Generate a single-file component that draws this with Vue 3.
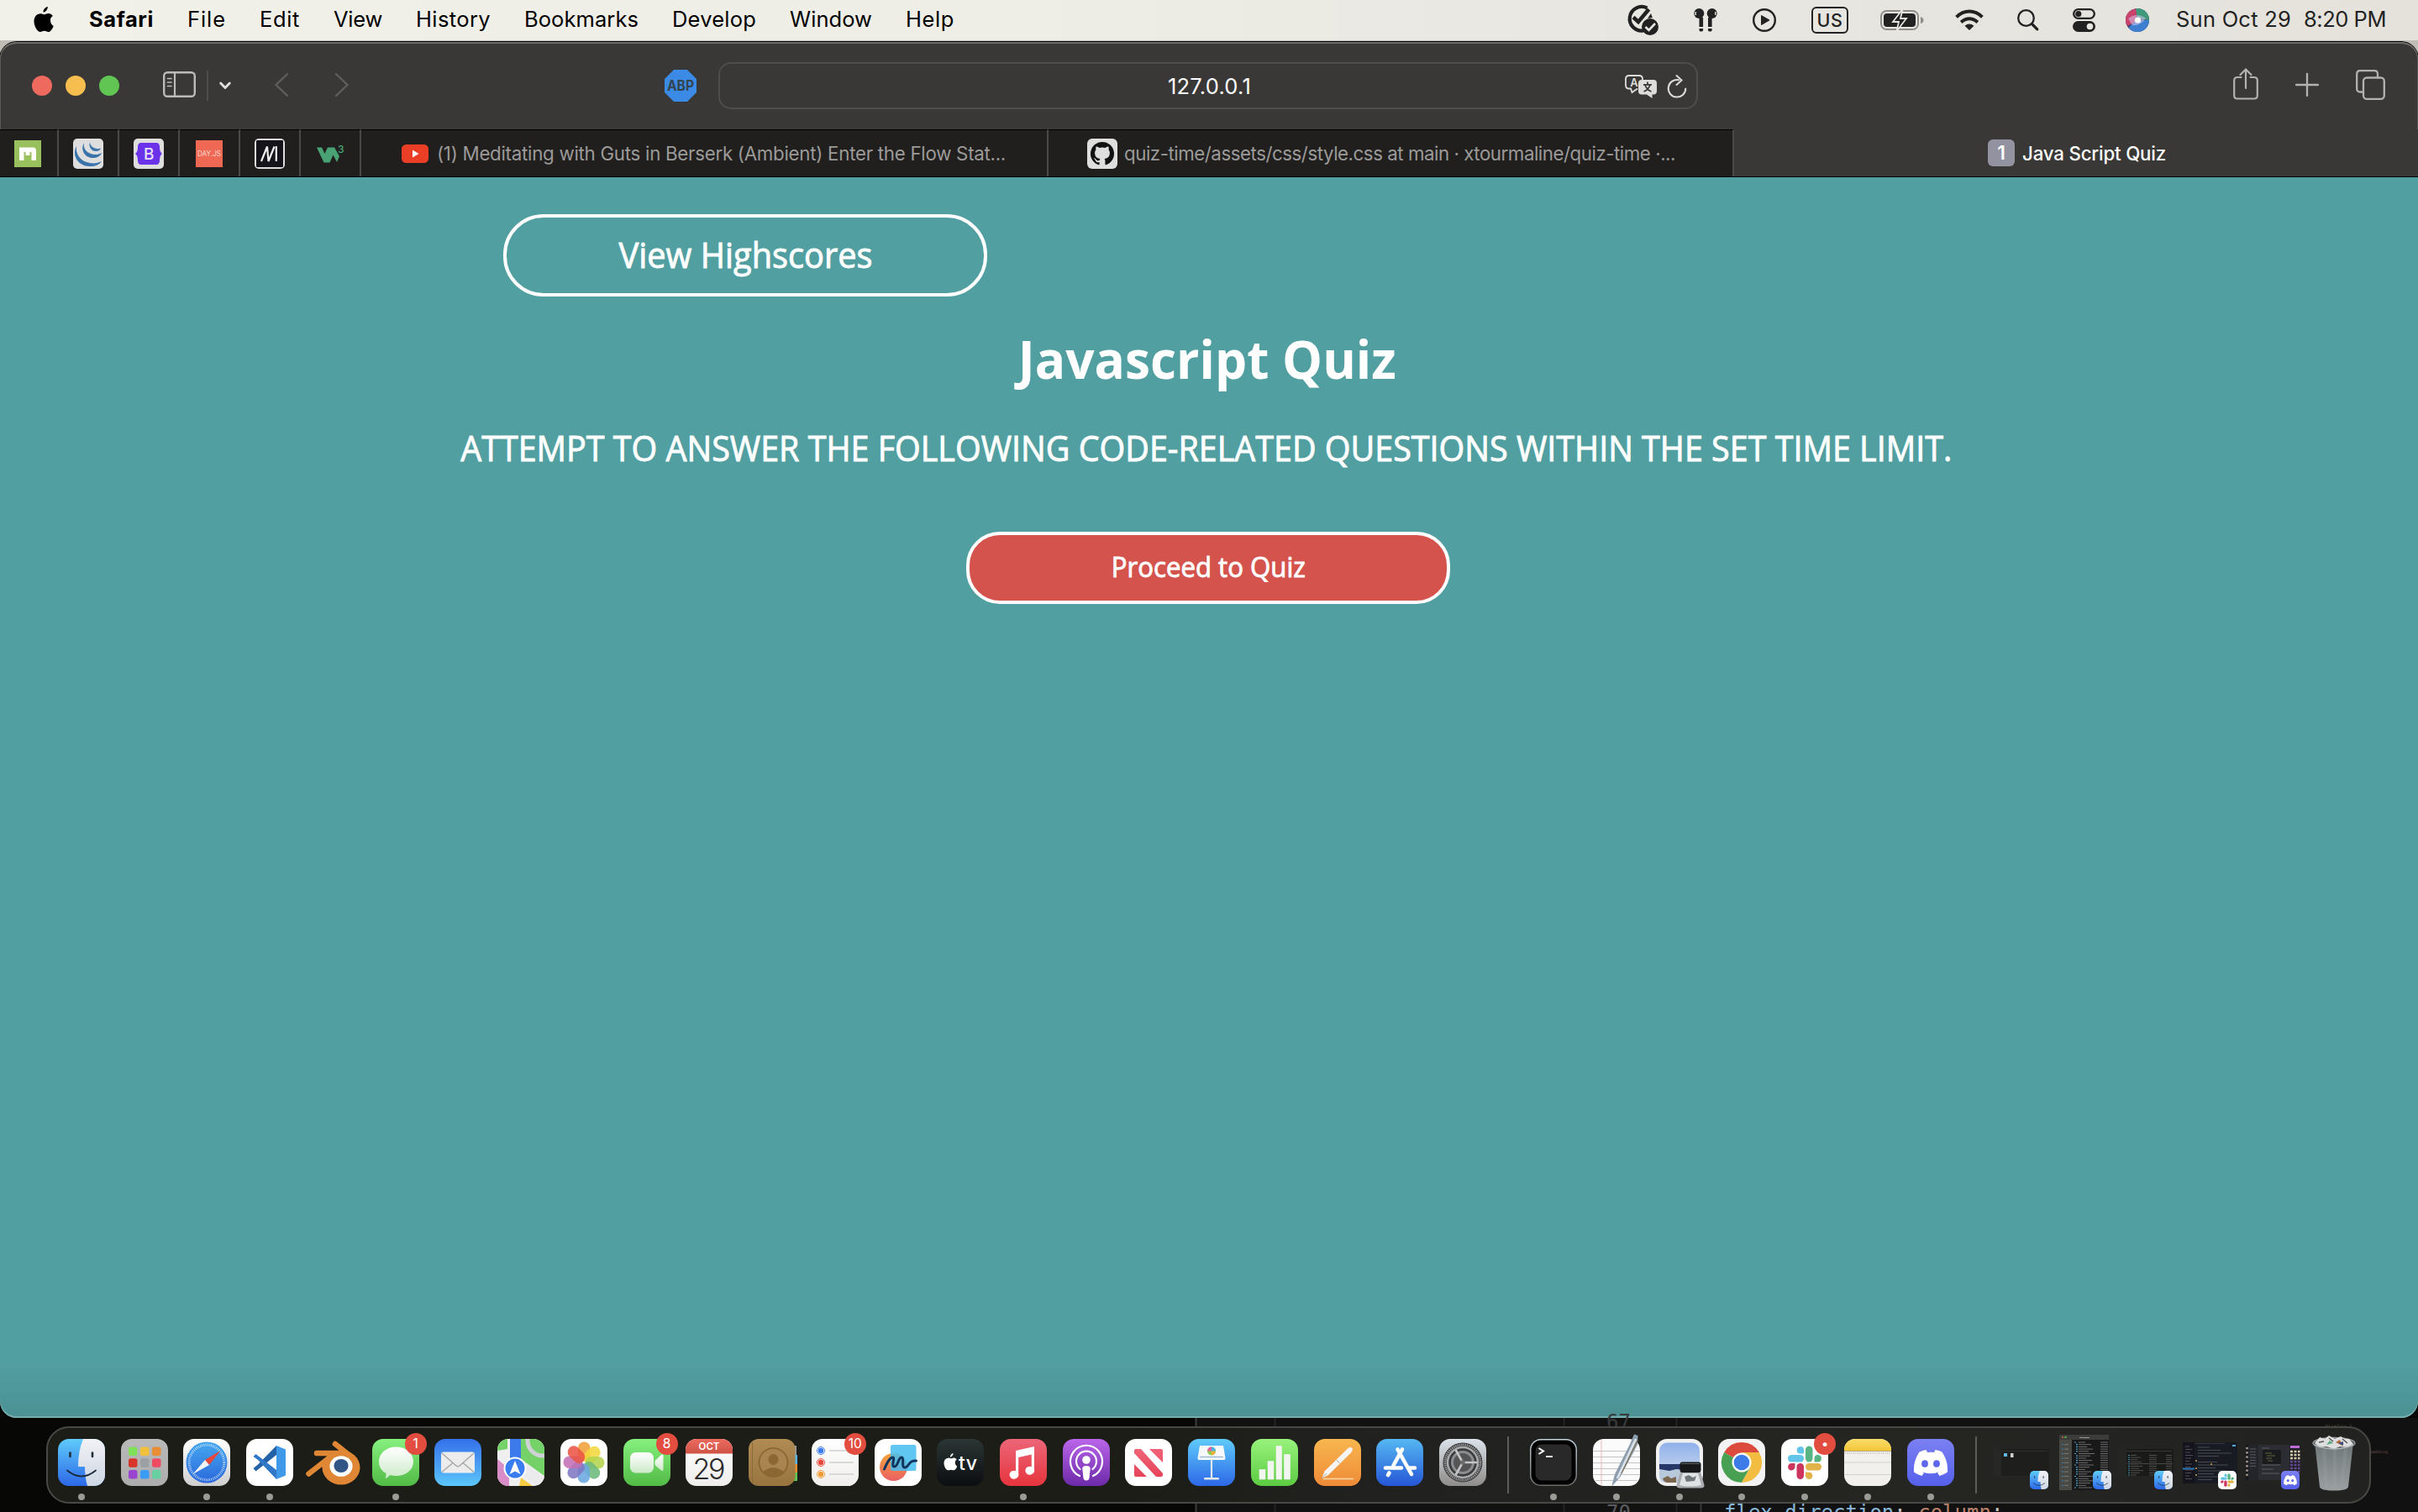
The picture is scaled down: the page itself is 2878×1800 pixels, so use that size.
<script setup>
// Spreads the letters of a label so that it fills the given width.
const vFit = {
  mounted(el, { value }) {
    const natural = el.getBoundingClientRect().width
    el.style.letterSpacing = (value - natural) / el.textContent.length + 'px'
  },
}

// Condenses the glyphs of a centred label to the given width.
const vCondense = {
  mounted(el, { value }) {
    el.style.transform = `scaleX(${value / el.getBoundingClientRect().width})`
  },
}

const menus = [
  ['File', 46], ['Edit', 48], ['View', 58], ['History', 89],
  ['Bookmarks', 136], ['Develop', 100], ['Window', 98], ['Help', 58],
]

const gradients = [
  ['gBlue', '#5fcbfa', '#2c68e8'],
  ['gFace', '#f2f2f6', '#cdd7e4'],
  ['gGrey', '#b9b9b9', '#adadad'],
  ['gWhite', '#ffffff', '#cfcfcf'],
  ['gCompass', '#45a8f0', '#2b68dc'],
  ['gGreen', '#86f07f', '#52bb46'],
  ['gBubble', '#ffffff', '#cdeac9'],
  ['gMail', '#3470ea', '#5cc6fa'],
  ['gPaper', '#ffffff', '#efeeec'],
  ['gRed', '#ec6a5e', '#cf5347'],
  ['gBrown', '#b08b54', '#98743f'],
  ['gTv', '#2b3634', '#0b0d11'],
  ['gMusic', '#ec6678', '#e6343d'],
  ['gPod', '#bb66ea', '#6c2aa8'],
  ['gNews', '#f06478', '#e6445a'],
  ['gNumbers', '#98f27c', '#5ccb42'],
  ['gPages', '#f8b64e', '#ee8b38'],
  ['gStore', '#55b8f2', '#2656d6'],
  ['gSettings', '#dbe2ea', '#8f8d8a'],
  ['gTerm', '#c3d5e0', '#6b6b6b'],
  ['gSky', '#8fb0ea', '#d7e2ef'],
  ['gNotes', '#f9dc6a', '#f4c63a'],
  ['gDiscord', '#7b80f2', '#5560ea'],
  ['gCan', '#6f7678', '#9aa0a2'],
  ['gFreeform', '#f4a43c', '#ea5f62'],
]

const apps = [
  { id: 'finder', open: true }, { id: 'launchpad' }, { id: 'safari', open: true },
  { id: 'vscode', open: true }, { id: 'blender' }, { id: 'messages', open: true, badge: '1' },
  { id: 'mail' }, { id: 'maps' }, { id: 'photos' }, { id: 'facetime', badge: '8' },
  { id: 'calendar' }, { id: 'contacts' }, { id: 'reminders', badge: '10' },
  { id: 'freeform' }, { id: 'tv' }, { id: 'music', open: true }, { id: 'podcasts' },
  { id: 'news' }, { id: 'keynote' }, { id: 'numbers' }, { id: 'pages' },
  { id: 'appstore' }, { id: 'settings' },
]
const recent = [
  { id: 'terminal', open: true }, { id: 'textedit', open: true }, { id: 'preview', open: true },
  { id: 'chrome', open: true }, { id: 'slack', open: true, badge: '•' },
  { id: 'notes', open: true }, { id: 'discord', open: true },
]
const minis = [
  { kind: 'empty', app: 'finder', w: 66, h: 32, gap: 20, off: 1 },
  { kind: 'list', app: 'finder', w: 59, h: 66, gap: 12, off: -3 },
  { kind: 'files', app: 'finder', w: 66, h: 32, gap: 11, off: 1 },
  { kind: 'slack', app: 'slack', w: 65, h: 49, gap: 11, off: 1 },
  { kind: 'chat', app: 'discord', w: 65, h: 42, gap: 10, off: 1 },
]

const pads = [
  '#7fe05a', '#f2c13c', '#e88e34', '#d8352a', '#9aa0a4', '#ee4a62', '#9a45d0', '#3a9cf2', '#68cfa0',
]
const petals = ['#f0a03a', '#f2d83c', '#b5d44c', '#6cb97c', '#6aa8e0', '#8077c4', '#c46fb4', '#ea5546']
const range = (n) => Array.from({ length: n }, (_, i) => i)
</script>

<template>
  <div class="screen">
    <!-- shared artwork -->
    <svg class="defs" width="0" height="0">
      <defs>
        <linearGradient v-for="g in gradients" :id="g[0]" :key="g[0]" x1="0" y1="0" x2="0" y2="1">
          <stop offset="0" :stop-color="g[1]" />
          <stop offset="1" :stop-color="g[2]" />
        </linearGradient>
        <clipPath id="sq"><rect width="56" height="56" rx="13" /></clipPath>
        <clipPath id="orb"><circle cx="14" cy="14" r="14" /></clipPath>
      </defs>

      <symbol id="finder" viewBox="0 0 56 56">
        <g clip-path="url(#sq)">
          <rect width="56" height="56" fill="url(#gBlue)" />
          <path d="M30 0H56V56H35Q32 46 32 33H24Q24 14 30 0Z" fill="url(#gFace)" />
        </g>
        <path d="M14.500 16.500V21M41 16.500V21" stroke="#22303c" stroke-width="2.600" stroke-linecap="round" />
        <path d="M11 37.500Q28 51.500 45 37.500" fill="none" stroke="#1b2a3a" stroke-width="1.800" stroke-linecap="round" />
      </symbol>

      <symbol id="launchpad" viewBox="0 0 56 56">
        <rect width="56" height="56" rx="13" fill="url(#gGrey)" />
        <rect
          v-for="(c, i) in pads" :key="i" :x="9 + (i % 3) * 14" :y="9.500 + Math.floor(i / 3) * 13.700"
          width="10.500" height="10.500" rx="2.500" :fill="c"
        />
      </symbol>

      <symbol id="safari" viewBox="0 0 56 56">
        <rect width="56" height="56" rx="13" fill="url(#gWhite)" />
        <circle cx="28" cy="28" r="24.500" fill="url(#gCompass)" />
        <circle cx="28" cy="28" r="20.800" fill="none" stroke="#cfe6fa" stroke-width="3" stroke-dasharray="0.800 1.380" />
        <path d="M44.500 14L31 31L26 25Z" fill="#e5473a" />
        <path d="M11.500 42L26 25L31 31Z" fill="#f3f3f3" />
      </symbol>

      <symbol id="vscode" viewBox="0 0 56 56">
        <rect width="56" height="56" rx="13" fill="#fff" />
        <path d="M36 8L14 30.500L8.500 35L11.500 38.500L36 19Z" fill="#2462a8" />
        <path d="M36 48L14 25L8.500 21L11.500 18L36 37Z" fill="#2f78c8" />
        <path d="M36 8L47 12.500V43.500L36 48Z" fill="#3f98e8" />
      </symbol>

      <symbol id="blender" viewBox="0 0 66 56">
        <g stroke="#e08735" stroke-width="6.500" stroke-linecap="round" fill="none">
          <path d="M36 6L56 22M14 17H40M4.500 41.500L32 20" />
        </g>
        <path d="M28 18H46L58 24L62 38L24 44L20 32Z" fill="#e08735" />
        <ellipse cx="43" cy="34" rx="22.500" ry="20.500" fill="#e08735" />
        <ellipse cx="43" cy="32.500" rx="13.600" ry="12.300" fill="#fff" />
        <ellipse cx="43" cy="32" rx="8.600" ry="8" fill="#335585" />
      </symbol>

      <symbol id="messages" viewBox="0 0 56 56">
        <rect width="56" height="56" rx="13" fill="url(#gGreen)" />
        <path d="M28.500 9.500C40 9.500 49 17 49 27S40 44 28.500 44Q24.500 44 21 43Q19 46 15.500 47Q17 44.500 16.500 41C11 38 8 33 8 27C8 17 17 9.500 28.500 9.500Z" fill="url(#gBubble)" />
      </symbol>

      <symbol id="mail" viewBox="0 0 56 56">
        <rect width="56" height="56" rx="13" fill="url(#gMail)" />
        <rect x="8" y="15.500" width="40" height="25" rx="3" fill="#ececec" />
        <path d="M9 17L26 32Q28 33.800 30 32L47 17M9 39.500L22 28.500M47 39.500L34 28.500" fill="none" stroke="#a5a5a5" stroke-width="1.300" />
      </symbol>

      <symbol id="maps" viewBox="0 0 56 56">
        <g clip-path="url(#sq)">
          <rect width="56" height="56" fill="#efefef" />
          <path d="M0 0H12V12L0 14ZM28 0H56V44L28 24Z" fill="#74d268" />
          <path d="M0 24L14 36V56H0Z" fill="#d88cc8" />
          <path d="M28 46L42 56H26Z" fill="#f6cd42" />
          <path d="M24 24L56 46V56H48L24 40Z" fill="#ebebee" />
          <path d="M15 0H28V32H15Z" fill="#3c79ea" />
          <circle cx="54" cy="2" r="18" fill="none" stroke="#cfd2d4" stroke-width="5" />
        </g>
        <circle cx="21" cy="35" r="13.500" fill="#fff" />
        <circle cx="21" cy="35" r="11.500" fill="#3a7df0" />
        <path d="M21 26L27.500 42L21 38.500L14.500 42Z" fill="#fff" />
      </symbol>

      <symbol id="photos" viewBox="0 0 56 56">
        <rect width="56" height="56" rx="13" fill="#fff" />
        <rect
          v-for="(c, i) in petals" :key="c" x="21" y="3.500" width="14.500" height="23" rx="7.200"
          :fill="c" fill-opacity="0.880" :transform="`rotate(${i * 45} 28 28)`"
        />
      </symbol>

      <symbol id="facetime" viewBox="0 0 56 56">
        <rect width="56" height="56" rx="13" fill="url(#gGreen)" />
        <rect x="8" y="16" width="28" height="24.500" rx="6.500" fill="url(#gBubble)" />
        <path d="M37.500 26L45 19Q47.500 17.500 47.500 20V36Q47.500 39 45 37.500L37.500 31Z" fill="url(#gBubble)" />
      </symbol>

      <symbol id="calendar" viewBox="0 0 56 56">
        <g clip-path="url(#sq)">
          <rect width="56" height="56" fill="url(#gPaper)" />
          <rect width="56" height="17.500" fill="url(#gRed)" />
        </g>
      </symbol>

      <symbol id="contacts" viewBox="0 0 58 56">
        <path d="M52 8H57V50H52Z" fill="#9d9d9d" />
        <path d="M52 19H58.500V30H52Z" fill="#59b5ea" />
        <path d="M52 30H58.500V40H52Z" fill="#ee8e2e" />
        <path d="M52 40H58V50H52Z" fill="#5fc654" />
        <rect width="55.500" height="56" rx="12" fill="url(#gBrown)" />
        <path d="M4.500 4V52" stroke="#8d6a38" />
        <circle cx="29.500" cy="28" r="17" fill="#a98450" stroke="#86642f" stroke-width="1.600" />
        <ellipse cx="29.500" cy="24.500" rx="6" ry="6.500" fill="#8a6733" />
        <path d="M17 39Q29.500 29.500 42 39Q37 45 29.500 45T17 39Z" fill="#8a6733" />
      </symbol>

      <symbol id="reminders" viewBox="0 0 56 56">
        <rect width="56" height="56" rx="13" fill="url(#gPaper)" />
        <g v-for="(c, i) in ['#3b7bf0', '#e8483b', '#f09a36']" :key="c">
          <circle cx="11" :cy="14 + i * 14" r="4.500" fill="#fff" :stroke="c" stroke-width="1" />
          <circle cx="11" :cy="14 + i * 14" r="3.200" :fill="c" />
          <path :d="`M21 ${14 + i * 14}H50`" stroke="#cfcfcf" stroke-width="1.500" />
        </g>
      </symbol>

      <symbol id="freeform" viewBox="0 0 56 56">
        <rect width="56" height="56" rx="13" fill="#fff" />
        <circle cx="22.500" cy="33.500" r="16.500" fill="url(#gFreeform)" />
        <rect x="19" y="7" width="30.500" height="31" rx="2.500" fill="#43bdf0" fill-opacity="0.850" />
        <path d="M11.500 36C15 28 18 22 21.500 22C25 22 19 33 23.500 33C28 33 28 22 32 22C36 22 31 34 36 34C41 34 40 25 49.500 26" fill="none" stroke="#11355e" stroke-width="3" stroke-linecap="round" />
      </symbol>

      <symbol id="apple" viewBox="0 0 25 30">
        <path d="M17.800 0C18 2.900 15.400 6.600 12.500 6.600C12.200 3.600 15 .4 17.800 0ZM21 15.800C21 12.600 23.600 11.100 23.900 10.900C22.300 8.600 19.900 8.200 19 8.100C16.900 7.900 15 9.300 13.900 9.300C12.800 9.300 11.200 8.100 9.400 8.200C4.500 8.300 1.500 12 1.500 17.300C1.500 23 5.300 30 9 30C10.800 30 11.500 28.800 13.700 28.800C15.800 28.800 16.500 30 18.400 30C21.300 30 23.800 25.700 24.700 22.900C24.600 22.800 21 21.300 21 15.800Z" fill="currentColor" />
      </symbol>

      <symbol id="tv" viewBox="0 0 56 56">
        <rect width="56" height="56" rx="13" fill="url(#gTv)" />
        <svg x="7.500" y="17" width="17" height="20.500" viewBox="0 0 25 30" color="#fff"><use href="#apple" /></svg>
      </symbol>

      <symbol id="music" viewBox="0 0 56 56">
        <rect width="56" height="56" rx="13" fill="url(#gMusic)" />
        <path d="M19 14L41 9V36A5.500 5 0 1 1 37.800 33V18.500L22.200 22V41A5.500 5 0 1 1 19 38Z" fill="#fff" />
      </symbol>

      <symbol id="podcasts" viewBox="0 0 56 56">
        <rect width="56" height="56" rx="13" fill="url(#gPod)" />
        <g fill="none" stroke="#fff" stroke-width="2.200" stroke-linecap="round">
          <path d="M20 44A19 19 0 1 1 36 44" />
          <path d="M20.500 36A12 12 0 1 1 35.500 36" />
        </g>
        <circle cx="28" cy="25" r="4.800" fill="#fff" />
        <path d="M28 32Q33 32 32.700 35.500L31.500 46.500Q31 49.500 28 49.500T24.500 46.500L23.300 35.500Q23 32 28 32Z" fill="#fff" />
      </symbol>

      <symbol id="news" viewBox="0 0 56 56">
        <rect width="56" height="56" rx="13" fill="#fff" />
        <path d="M11 14Q11 12 13 12H19L45 41V43Q45 45 43 45H37L11 17ZM29 12H43Q45 12 45 14V28ZM11 30V43Q11 45 13 45H26Z" fill="url(#gNews)" />
      </symbol>

      <symbol id="keynote" viewBox="0 0 56 56">
        <rect width="56" height="56" rx="13" fill="url(#gBlue)" />
        <path d="M28 25V46" stroke="#e6e8ea" stroke-width="2.200" />
        <path d="M14 8H42L44.500 23Q44.500 25 43 25H13Q11.500 25 11.500 23Z" fill="#f7f8fa" />
        <path d="M14 21.500H42" stroke="#9dbcd8" stroke-width="1.500" />
        <rect x="19" y="46" width="18" height="2.500" rx="1.200" fill="#e6e8ea" />
        <circle cx="28" cy="14.500" r="5" fill="#8ccc50" />
        <path d="M28 14.500V9.500A5 5 0 0 1 33 14.500Z" fill="#48b4ea" />
        <path d="M28 14.500H23A5 5 0 0 1 28 9.500Z" fill="#ea5fa0" />
        <path d="M28 14.500H33A5 5 0 0 1 28 19.500Z" fill="#f0b13c" />
      </symbol>

      <symbol id="numbers" viewBox="0 0 56 56">
        <rect width="56" height="56" rx="13" fill="url(#gNumbers)" />
        <path d="M10 36.500H17V48H10ZM20 26.500H27V48H20ZM30 8.500H36.500V48H30ZM39.500 18.500H46.500V48H39.500Z" fill="#f2f5f0" stroke="#f2f5f0" stroke-linejoin="round" stroke-width=".6" />
      </symbol>

      <symbol id="pages" viewBox="0 0 56 56">
        <rect width="56" height="56" rx="13" fill="url(#gPages)" />
        <path d="M11 47.500H47" stroke="#ffd9a8" stroke-width="1.500" />
        <path d="M9.500 47L12.500 38.500L40 11.500Q43.500 9 45.500 11Q46.500 13 44 16.500L17 43Z" fill="#f5f5f5" />
        <path d="M27 25L30.500 29M9.500 47L15 41" stroke="#a9a098" stroke-width="1" />
      </symbol>

      <symbol id="appstore" viewBox="0 0 56 56">
        <rect width="56" height="56" rx="13" fill="url(#gStore)" />
        <g stroke="#fff" stroke-width="4.600" stroke-linecap="round">
          <path d="M31 12.500L20.500 31.500M25.500 12.500L42 42M11 34.500H30M39.500 34.500H46M15.500 40.500L14 43" />
        </g>
      </symbol>

      <symbol id="settings" viewBox="0 0 56 56">
        <rect width="56" height="56" rx="13" fill="url(#gSettings)" />
        <circle cx="28" cy="28" r="23.500" fill="#3b3b3c" />
        <circle cx="28" cy="28" r="21" fill="none" stroke="#98999b" stroke-width="2.800" stroke-dasharray="1.400 .95" />
        <circle cx="28" cy="28" r="18" fill="none" stroke="#a9aaac" stroke-width="2.500" />
        <circle cx="28" cy="28" r="12.500" fill="#555" stroke="#8c8d90" stroke-width="3" />
        <path d="M28 28H45M28 28L19.500 13M28 28L19.500 43" stroke="#c4c5c8" stroke-width="2.600" />
        <circle cx="28" cy="28" r="2.800" fill="#6c6c6c" />
      </symbol>

      <symbol id="terminal" viewBox="0 0 56 56">
        <rect width="56" height="56" rx="13" fill="url(#gTerm)" />
        <rect x="1.500" y="1.500" width="53" height="53" rx="11.500" fill="#000" />
        <rect x="6.500" y="6.500" width="43" height="43" rx="7.500" fill="#292929" />
        <path d="M10.500 11L16 14.500L10.500 18" fill="none" stroke="#fff" stroke-width="2" />
        <path d="M19 21H27" stroke="#fff" stroke-width="1.800" />
      </symbol>

      <symbol id="textedit" viewBox="0 -6 56 64">
        <rect width="56" height="56" rx="13" fill="#fbfbfb" />
        <path d="M10 1V55" stroke="#e8b9b4" stroke-width="1" />
        <path d="M0 14.500H56M0 21.500H56M0 28.500H56M0 35.500H56M0 42.500H56M3 49.500H53" stroke="#c4c4c4" stroke-width="1" />
        <path d="M49 -5.500L53.500 -4L53 7L32 46L22 57L26 42L44 6Z" fill="#8d9fae" />
        <path d="M51 0L29 47" stroke="#d9e2e9" stroke-width="2.600" />
        <path d="M53 2L34 41" stroke="#84643e" stroke-width="1" />
      </symbol>

      <symbol id="preview" viewBox="0 0 58 59">
        <rect width="56" height="56" rx="13" fill="#f1f0f0" />
        <rect x="4" y="4.500" width="48" height="47.500" rx="9" fill="url(#gSky)" />
        <path d="M4 30H52V38H4Z" fill="#27376a" />
        <path d="M4 36L16 38L24 36L52 38V43Q52 52 43 52H13Q4 52 4 43Z" fill="#b9c9dc" />
        <path d="M8 47L14 44L18 47L24 45V52H13Q9 51 8 47Z" fill="#7c6650" />
        <path d="M29 39H53L57.500 55Q58 58 54 58.500H28Q24 58 24.500 55Z" fill="#a9adb0" />
        <path d="M32 41H50L54 55Q41 58 28 55Z" fill="#dfe3e4" />
        <path d="M34 45L39 43L44 46L48 44L46 50L36 51Z" fill="#70787c" />
        <rect x="28.500" y="27.500" width="25" height="12.500" rx="3" fill="#17181a" />
        <path d="M30 29.500H52" stroke="#5e6062" stroke-width="1" />
      </symbol>

      <symbol id="chrome" viewBox="0 0 56 56">
        <rect width="56" height="56" rx="13" fill="#f3f3f3" />
        <path d="M28 28L7.200 16A24 24 0 0 1 48.800 16Z" fill="#db4a3c" />
        <path d="M28 28L7.200 16A24 24 0 0 0 28 52L38 34Z" fill="#48a052" />
        <path d="M28 16H48.800A24 24 0 0 1 28 52L38.400 34Z" fill="#f3bd42" />
        <circle cx="28" cy="28" r="11.500" fill="#fff" />
        <circle cx="28" cy="28" r="9.300" fill="#3d7be8" />
      </symbol>

      <symbol id="slack" viewBox="0 0 56 56">
        <rect width="56" height="56" rx="13" fill="#fff" />
        <g fill="#63c4ea"><rect x="8" y="19" width="19" height="8.500" rx="4.200" /><path d="M27 17.500H23A4.200 4.200 0 1 1 27 12.500Z" /></g>
        <g fill="#58b583"><rect x="29" y="8.500" width="8.500" height="19" rx="4.200" /><path d="M39.500 27.500V23A4.200 4.200 0 1 1 43.500 27.500Z" /></g>
        <g fill="#e2b34a"><rect x="29" y="29" width="19" height="8.500" rx="4.200" /><path d="M29 39.500H33A4.200 4.200 0 1 1 29 43.500Z" /></g>
        <g fill="#cb3560"><rect x="18.500" y="29" width="8.500" height="19" rx="4.200" /><path d="M16.500 29V33A4.200 4.200 0 1 1 12.500 29Z" /></g>
      </symbol>

      <symbol id="notes" viewBox="0 0 56 56">
        <g clip-path="url(#sq)">
          <rect width="56" height="56" fill="#f1f0ec" />
          <rect width="56" height="14" fill="url(#gNotes)" />
        </g>
        <path d="M0 14.500H56" stroke="#b5a672" stroke-width="1" />
        <path d="M1 17H55" stroke="#b9b7b0" stroke-width="1.500" stroke-dasharray="1 1.500" />
        <path d="M0 28H56M0 42.500H56" stroke="#d3d2cd" stroke-width="1" />
      </symbol>

      <symbol id="discord" viewBox="0 0 56 56">
        <rect width="56" height="56" rx="13" fill="url(#gDiscord)" />
        <path d="M22.500 13L24 16Q28 15.400 32 16L33.500 13Q38 13.800 41.500 15.600Q49 27 48 39.500Q43.500 42.800 38.500 44L36 40.300L38.500 39Q28 43.500 17.500 39L20 40.300L17.500 44Q12.500 42.800 8 39.500Q7 27 14.500 15.600Q18 13.800 22.500 13Z" fill="#fff" />
        <ellipse cx="21" cy="29.500" rx="3.900" ry="4.300" fill="#5d66ec" />
        <ellipse cx="35" cy="29.500" rx="3.900" ry="4.300" fill="#5d66ec" />
      </symbol>
    </svg>

    <!-- menu bar -->
    <header class="menubar">
      <svg class="apple" width="25" height="30"><use href="#apple" /></svg>
      <nav class="menus">
        <span v-fit="77" class="app-name">Safari</span>
        <span v-for="m in menus" :key="m[0]" v-fit="m[1]">{{ m[0] }}</span>
      </nav>
      <div class="status">
        <svg width="40" height="36" viewBox="0 0 40 36">
          <path d="M26.500 3.600A14.300 14.300 0 1 0 22 30.500" fill="none" stroke="#222" stroke-width="4.200" />
          <path d="M10 14.500L16 20L28.500 5" fill="none" stroke="#222" stroke-width="4.600" />
          <path d="M27 16L31 10L32.800 15Z" fill="#222" />
          <circle cx="30" cy="26" r="10" fill="#222" />
          <path d="M24.500 26L28.500 30L36 22" fill="none" stroke="#e7e6e0" stroke-width="2.600" />
        </svg>
        <svg class="pods" width="28" height="28" viewBox="0 0 28 28" fill="#222">
          <circle cx="6.300" cy="6" r="6" /><circle cx="21.700" cy="6" r="6" />
          <rect x="6.500" y="11" width="4.600" height="11" /><rect x="17" y="11" width="4.600" height="11" />
          <path d="M6.500 24H11.100V26Q11 27.500 8.800 27.500T6.500 26ZM17 24H21.600V26Q21.500 27.500 19.300 27.500T17 26Z" />
          <path d="M2.200 4V8M25.800 4V8" stroke="#e7e6e0" stroke-width="1.400" />
        </svg>
        <svg class="play" width="28" height="28" viewBox="0 0 28 28">
          <circle cx="14" cy="14" r="12.800" fill="none" stroke="#222" stroke-width="2.400" />
          <path d="M10.500 8.500V19.500L20 14Z" fill="#222" stroke="#222" stroke-linejoin="round" />
        </svg>
        <span class="lang"><span v-fit="31">US</span></span>
        <svg class="battery" width="52" height="24" viewBox="0 0 52 24">
          <rect x="1" y="1" width="44" height="22" rx="6.500" fill="none" stroke="#8f8e8a" stroke-width="2" />
          <path d="M48 8Q51.500 9 51.500 12T48 16Z" fill="#8f8e8a" />
          <rect x="4" y="4" width="38" height="16" rx="4" fill="#222" />
          <path d="M26.500 -1L15 14H22L19.500 25L31 10H24Z" fill="#222" stroke="#e7e6e0" stroke-width="1.800" />
        </svg>
        <svg class="wifi" width="34" height="26" viewBox="0 0 34 26">
          <g fill="none" stroke="#222" stroke-width="4">
            <path d="M1.600 9.300Q8.500 2.500 17 2.500T32.400 9.300" />
            <path d="M7.200 15.500Q11.500 11.200 17 11.200T26.800 15.500" />
          </g>
          <path d="M17 25L11.500 19.800Q17 15.400 22.500 19.800Z" fill="#222" />
        </svg>
        <svg class="search" width="26" height="26" viewBox="0 0 26 26" fill="none" stroke="#222" stroke-linecap="round">
          <circle cx="10.500" cy="10.500" r="9.300" stroke-width="2.300" /><path d="M17.500 17.500L23.800 23.800" stroke-width="3.200" />
        </svg>
        <svg class="control" width="27" height="28" viewBox="0 0 27 28">
          <rect x="1.200" y="1.200" width="24.600" height="10.600" rx="5.300" fill="none" stroke="#222" stroke-width="2.300" />
          <circle cx="6.800" cy="6.500" r="3.600" fill="#222" />
          <rect y="15" width="27" height="13" rx="6.500" fill="#222" />
          <circle cx="20.500" cy="21.500" r="3.800" fill="#e7e6e0" />
        </svg>
        <svg class="siri" width="28" height="28" viewBox="0 0 28 28">
          <g clip-path="url(#orb)">
            <rect width="28" height="28" fill="#3c3f6e" />
            <path d="M0 0H14L12 16L0 22Z" fill="#c8446c" />
            <path d="M12 0H28V14L14 12Z" fill="#3f9a7c" />
            <path d="M4 22L14 14L28 14V28H4Z" fill="#3f7fd0" />
            <path d="M3 12Q14 4 24 12Q16 22 8 20Z" fill="#d7c8ee" fill-opacity="0.550" />
            <circle cx="14.500" cy="14" r="3.600" fill="#fff" />
          </g>
        </svg>
        <span v-fit="137" class="date">Sun Oct 29</span>
        <span v-fit="98" class="time">8:20 PM</span>
      </div>
    </header>

    <!-- browser window -->
    <main class="window">
      <div class="toolbar">
        <div class="lights"><i class="red" /><i class="yellow" /><i class="green" /></div>
        <svg class="sidebar" width="39" height="31" viewBox="0 0 39 31" fill="none" stroke="#bcbbb9">
          <rect x="1.200" y="1.200" width="36.600" height="28.600" rx="4" stroke-width="2.400" />
          <path d="M14 1V30" stroke-width="2.200" /><path d="M5.500 8.500H10M5.500 13H10M5.500 17.500H10" stroke-width="1.700" stroke-linecap="round" />
        </svg>
        <i class="rule" />
        <svg class="chev" width="14" height="10" viewBox="0 0 14 10"><path d="M1.700 2L7 7.500L12.300 2" fill="none" stroke="#deddda" stroke-width="3" stroke-linecap="round" stroke-linejoin="round" /></svg>
        <svg class="back" width="16" height="28" viewBox="0 0 16 28"><path d="M15 1.200L1.500 14L15 26.800" fill="none" stroke="#5f5e5c" stroke-width="2.300" stroke-linecap="round" /></svg>
        <svg class="fwd" width="16" height="28" viewBox="0 0 16 28"><path d="M1 1.200L14.500 14L1 26.800" fill="none" stroke="#5f5e5c" stroke-width="2.300" stroke-linecap="round" /></svg>
        <svg class="abp" width="38" height="38" viewBox="0 0 38 38">
          <path d="M11 0H27L38 11V27L27 38H11L0 27V11Z" fill="#3b8ae6" />
          <text x="19" y="25" text-anchor="middle" font-size="17" font-weight="700" textLength="32" lengthAdjust="spacingAndGlyphs" fill="#33444f">ABP</text>
        </svg>
        <div class="url">
          <span />
          <span v-fit="102" class="address">127.0.0.1</span>
          <div class="url-icons">
            <svg width="38" height="28" viewBox="0 0 38 28">
              <path d="M15 16.500L8.500 21L7 16.500H5Q1 16.500 1 12.500V5Q1 1 5 1H17Q21 1 21 5V6" fill="none" stroke="#dddcda" stroke-width="1.800" />
              <text x="11" y="13.500" text-anchor="middle" font-size="13" font-weight="600" fill="#dddcda">A</text>
              <path d="M20 6H34Q38 6 38 10V19.500Q38 23.500 34 23.500H32.500V28L26 23.500H20Q16 23.500 16 19.500V10Q16 6 20 6Z" fill="#dddcda" />
              <path d="M27 8.500V11M22 11.800H32M30 12Q28 18 22.500 20M24 12Q26 18 31.500 20" stroke="#393836" stroke-width="1.700" fill="none" />
            </svg>
            <svg width="23" height="28" viewBox="0 0 23 28" fill="none" stroke="#dddcda" stroke-width="2" stroke-linecap="round">
              <path d="M13 6.200A10.300 10.300 0 1 0 21.300 16.500" /><path d="M10.500 1L16.500 6.500L10.500 12" />
            </svg>
          </div>
        </div>
        <svg class="share" width="30" height="38" viewBox="0 0 30 38" fill="none" stroke="#b3b2b0" stroke-width="2.200" stroke-linecap="round">
          <path d="M9.500 11H5Q1.200 11 1.200 15V32.500Q1.200 36.500 5 36.500H25Q28.800 36.500 28.800 32.500V15Q28.800 11 25 11H20.500M15 24V2M8.500 8L15 1.500L21.500 8" />
        </svg>
        <svg class="plus" width="28" height="28" viewBox="0 0 28 28"><path d="M14 1V27M1 14H27" stroke="#b3b2b0" stroke-width="2.300" stroke-linecap="round" /></svg>
        <svg class="copies" width="35" height="36" viewBox="0 0 35 36" fill="none" stroke="#b3b2b0" stroke-width="2.300">
          <rect x="9" y="9.500" width="24.800" height="25.300" rx="4" /><path d="M9 26.500H5.500Q1.200 26.500 1.200 22.500V5.200Q1.200 1.200 5.200 1.200H22Q26 1.200 26 5.200V9" />
        </svg>
      </div>

      <div class="tabs">
        <div class="pin first">
          <svg width="32" height="32" viewBox="0 0 32 32"><rect width="32" height="32" fill="#98c05c" /><path d="M6 8.500H22Q26 8.500 26 12.500V24H20.500V14H18.500V18H13.500V14H11.500V24H6Z" fill="#fff" /></svg>
        </div>
        <div class="pin">
          <svg width="36" height="36" viewBox="0 0 36 36"><rect width="36" height="36" rx="5" fill="#dedede" />
            <path d="M4 9C-2 20 6 33 20 33C27 33 31 31 34 27C28 30 22 30 16 28C7 25 3 17 4 9ZM13 5C8 14 15 23 23 23C29 23 32 21 34 17C30 19 26 20 21 18C15 16 12 11 13 5ZM20 4C18 10 22 15 27 15C30 15 32 14 33 11C30 13 27 12 25 11C22 10 20 7 20 4Z" fill="#3a72aa" /></svg>
        </div>
        <div class="pin">
          <svg width="36" height="36" viewBox="0 0 36 36"><rect width="36" height="36" rx="5" fill="#dedede" />
            <path d="M9 5H27Q31 5 31 10Q31 16 34 18Q31 20 31 26Q31 31 27 31H9Q5 31 5 26Q5 20 2 18Q5 16 5 10Q5 5 9 5Z" fill="#6b32ea" /><text x="18.200" y="25" text-anchor="middle" font-size="19" font-weight="500" fill="#e8e0f6">B</text></svg>
        </div>
        <div class="pin">
          <svg width="32" height="32" viewBox="0 0 32 32"><rect width="32" height="32" fill="#ee6854" /><text x="16" y="19" text-anchor="middle" font-size="8.500" textLength="28" lengthAdjust="spacingAndGlyphs" fill="#fbd5ce">DAY.JS</text></svg>
        </div>
        <div class="pin">
          <svg width="36" height="36" viewBox="0 0 36 36"><rect width="36" height="36" rx="5" fill="#dedede" /><rect x="2" y="2" width="32" height="32" rx="1" fill="#15141a" /><path d="M8 27L15 9.500L16.500 27L23.500 9.500M25.800 9V27" fill="none" stroke="#eee" stroke-width="2.200" stroke-linejoin="bevel" /></svg>
        </div>
        <div class="pin">
          <svg width="32" height="22" viewBox="0 0 32 22"><path d="M0 3.500H6L9.500 11L13 3.500H21L27 14L24 21L19.500 12.500L15.500 21.500H8.500Z" fill="#49a274" /><path d="M12 20.500L14.500 14L11 11.500Z" fill="#49a274" /><text x="25" y="9.500" font-size="12" font-weight="500" fill="#49a274">3</text></svg>
        </div>
        <div class="tab video">
          <svg width="32" height="22" viewBox="0 0 32 22"><rect width="32" height="22" rx="5.500" fill="#ea3e26" /><path d="M13 6.500V15.500L20.500 11Z" fill="#fff" /></svg>
          <span v-fit="677">(1) Meditating with Guts in Berserk (Ambient) Enter the Flow Stat...</span>
        </div>
        <div class="tab repo">
          <svg width="36" height="36" viewBox="0 0 36 36"><rect width="36" height="36" rx="6" fill="#dedede" />
            <path d="M18 4A14 14 0 0 0 13.600 31.300C14.300 31.400 14.600 31 14.600 30.600V28C10.700 28.900 9.900 26.200 9.900 26.200C9.200 24.500 8.300 24.100 8.300 24.100C7 23.200 8.400 23.300 8.400 23.300C9.800 23.400 10.500 24.700 10.500 24.700C11.800 26.900 13.800 26.300 14.600 25.900C14.700 25 15.100 24.300 15.500 24C12.400 23.600 9.100 22.400 9.100 17C9.100 15.500 9.600 14.200 10.500 13.200C10.400 12.900 9.900 11.400 10.700 9.500C10.700 9.500 11.900 9.100 14.600 10.900A13.400 13.400 0 0 1 21.500 10.900C24.200 9.100 25.300 9.500 25.300 9.500C26.100 11.400 25.600 12.900 25.500 13.200C26.400 14.200 26.900 15.500 26.900 17C26.900 22.400 23.600 23.600 20.500 24C21 24.400 21.400 25.300 21.400 26.600V30.600C21.400 31 21.700 31.500 22.400 31.300A14 14 0 0 0 18 4Z" fill="#111" /></svg>
          <span v-fit="656">quiz-time/assets/css/style.css at main · xtourmaline/quiz-time ·...</span>
        </div>
        <div class="tab active">
          <b class="num">1</b>
          <span v-fit="171">Java Script Quiz</span>
        </div>
      </div>

      <section class="page">
        <button class="scores"><span v-condense="302">View Highscores</span></button>
        <h1><span v-condense="450">Javascript Quiz</span></h1>
        <p><span v-condense="1775">ATTEMPT TO ANSWER THE FOLLOWING CODE-RELATED QUESTIONS WITHIN THE SET TIME LIMIT.</span></p>
        <button class="start"><span v-condense="231">Proceed to Quiz</span></button>
      </section>
    </main>

    <!-- desktop strip with the dock -->
    <footer class="desk">
      <svg class="behind" width="2878" height="112" viewBox="0 0 2878 112">
        <rect x="1423" width="1455" height="112" fill="#111" />
        <path d="M1423.500 0V112" stroke="#3c3c3c" stroke-width="2" />
        <path d="M1517.500 0V112M1861.500 0V112M1995.500 0V112" stroke="#242424" stroke-width="2" />
        <path d="M2024.500 100V112" stroke="#383838" stroke-width="2" />
        <g class="code" font-size="24">
          <text x="1912" y="13" fill="#38393d">67</text>
          <text x="1912" y="121" fill="#5a5c60">70</text>
          <text x="2052" y="121" fill="#88b8d8">flex-direction<tspan fill="#c8c8c8">:</tspan> <tspan fill="#b9806a">column</tspan><tspan fill="#c8c8c8">;</tspan></text>
          <text x="2767" y="12" font-size="6" fill="#5c543c">display {</text>
          <text x="2821" y="42" font-size="5" fill="#6c4c48">padding</text>
        </g>
      </svg>
      <div class="dock">
        <div class="group">
          <div v-for="a in apps" :key="a.id" class="app">
            <svg :class="['icon', a.id]">
              <use :href="'#' + a.id" />
              <g v-if="a.id === 'calendar'" text-anchor="middle">
                <text x="28" y="13" font-size="11.500" font-weight="600" fill="#fff">OCT</text>
                <text x="28" y="48" font-size="34" font-weight="300" textLength="39" fill="#2c2c2c">29</text>
              </g>
              <text v-if="a.id === 'tv'" x="26" y="37" font-size="23" font-weight="500" textLength="22" fill="#fff">tv</text>
            </svg>
            <span v-if="a.badge" class="badge">{{ a.badge }}</span>
            <i v-if="a.open" class="dot" />
          </div>
        </div>
        <i class="split" />
        <div class="group">
          <div v-for="a in recent" :key="a.id" class="app">
            <svg :class="['icon', a.id]"><use :href="'#' + a.id" /></svg>
            <span v-if="a.badge" class="badge">{{ a.badge }}</span>
            <i v-if="a.open" class="dot" />
          </div>
        </div>
        <i class="split last" />
        <div v-for="(m, i) in minis" :key="i" class="mini" :style="{ marginLeft: m.gap + 'px', width: m.w + 'px' }">
          <svg :width="m.w" :height="m.h">
            <template v-if="m.kind === 'empty'">
              <rect :width="m.w" :height="m.h" rx="2" fill="#1e1e1d" />
              <rect width="9" :height="m.h" fill="#272726" /><path d="M9 2.500H64" stroke="#2e2e2d" />
              <rect x="12" y="5" width="4" height="4" fill="#61b8ea" /><rect x="20" y="5" width="3.500" height="5" fill="#d0d0d0" />
            </template>
            <template v-else-if="m.kind === 'list'">
              <rect :width="m.w" :height="m.h" rx="2" fill="#191919" />
              <rect width="15" :height="m.h" fill="#494946" /><rect width="59" height="6" fill="#3c3c3a" />
              <path d="M3 3H5" stroke="#e0574e" stroke-width="1.500" /><path d="M6 3H9" stroke="#5cb850" stroke-width="1.500" /><path d="M24 3.500H36" stroke="#999" />
              <g v-for="r in range(21)" :key="r">
                <path :d="`M${18 + (r % 5 === 0 ? 0 : 2)} ${9 + r * 2.700}h2`" stroke="#4aa4d4" stroke-width="1.200" />
                <path :d="`M23 ${9 + r * 2.700}h${8 + (r * 7) % 12}M49 ${9 + r * 2.700}h9`" stroke="#777" stroke-width=".9" />
                <path v-if="r % 2" :d="`M3 ${9 + r * 2.700}h2`" stroke="#3b86b4" /><path v-if="r % 2" :d="`M6 ${9 + r * 2.700}h5`" stroke="#888" stroke-width=".8" />
              </g>
            </template>
            <template v-else-if="m.kind === 'files'">
              <rect :width="m.w" :height="m.h" rx="2" fill="#1a1a19" />
              <rect width="10" :height="m.h" fill="#252524" /><path d="M10 2.500H64" stroke="#383837" />
              <g v-for="r in range(10)" :key="r">
                <path :d="`M12 ${7.500 + r * 2.600}h2`" stroke="#4690b8" /><path :d="`M15 ${7.500 + r * 2.600}h${7 + (r * 5) % 9}M37 ${7.500 + r * 2.600}h9M57 ${7.500 + r * 2.600}h7`" stroke="#5c5c5a" stroke-width=".8" />
              </g>
              <path d="M11 17.500H65" stroke="#484846" />
            </template>
            <template v-else-if="m.kind === 'slack'">
              <rect :width="m.w" :height="m.h" fill="#191b22" />
              <rect width="14" :height="m.h" fill="#15131c" /><path d="M15 1.500H50" stroke="#333844" /><path d="M0 31.500H14" stroke="#2a78b8" stroke-width="2" />
              <g v-for="r in range(12)" :key="r">
                <path :d="`M3 ${5 + r * 3.500}h${5 + (r * 3) % 5}`" stroke="#5c5c68" stroke-width=".8" />
                <path v-if="r !== 4" :d="`M18 ${6 + r * 3.500}h${14 + (r * 13) % 28}`" stroke="#4e5058" stroke-width=".9" />
              </g>
              <path d="M15 22h2M15 31h2M15 39h2M33 26h2" stroke="#c8a350" stroke-width="1.500" /><path d="M59 4h4" stroke="#55a8d8" stroke-width="2" />
            </template>
            <template v-else>
              <rect :width="m.w" :height="m.h" fill="#2c2d32" />
              <rect width="3" :height="m.h" fill="#17181b" /><rect x="3" width="12" :height="m.h" fill="#24252a" />
              <rect x="20" y="6" width="22" height="17" fill="#191b1c" /><path d="M23 10h8M25 13h10M24 16h7M26 19h6" stroke="#7a7752" stroke-width=".8" />
              <rect x="52" width="13" :height="m.h" fill="#202126" /><rect x="53" y="1" width="11" height="3" fill="#c06cd8" />
              <g v-for="r in range(7)" :key="r">
                <circle cx="1.500" :cy="4 + r * 5.300" r="1.500" fill="#9c8c88" /><path :d="`M5 ${5 + r * 3.400}h7`" stroke="#686a72" stroke-width=".8" />
                <path v-if="r < 1 || r > 3" :d="`M19 ${4 + r * 5}h${9 + (r * 7) % 15}`" stroke="#686a72" stroke-width=".8" />
                <path :d="`M53 ${8 + r * 4}h3M57.500 ${8 + r * 4}h3M62 ${8 + r * 4}h2.500`" :stroke="r < 3 ? '#d4cda8' : '#654894'" stroke-width="2.600" />
              </g>
            </template>
          </svg>
          <svg class="mini-app" :style="{ right: m.off + 'px' }"><use :href="'#' + m.app" /></svg>
        </div>
        <svg class="trash" width="52" height="68" viewBox="0 0 52 68">
          <path d="M3 9L49 9L43 62Q42 66.500 26 66.500T9 62Z" fill="url(#gCan)" />
          <path d="M14 18L17 62M27 18V64M40 16L35 62" stroke="#a5abac" stroke-width="4" stroke-opacity=".18" />
          <ellipse cx="26" cy="10" rx="25" ry="6.500" fill="#585d5f" stroke="#999fa1" stroke-width="1.300" />
          <path d="M3 10L9 3L15 5L20 1L27 5L34 2L39 5L44 5L49 11L42 15L33 14L26 17L17 14L9 15Z" fill="#dedede" />
          <path d="M8 9L14 8M20 4L25 8M36 5L42 10" stroke="#555" stroke-width="1.500" />
          <path d="M17 12L21 7L25 10Z" fill="#58a880" /><path d="M28 9L33 6L36 13Z" fill="#b4693c" /><path d="M31 10L37 8V13Z" fill="#3d4e78" />
          <path d="M3 12Q26 22 49 12" fill="none" stroke="#b7bcbd" stroke-width="1.300" />
        </svg>
      </div>
    </footer>
  </div>
</template>

<style>
body {
  margin: 0;
  overflow: hidden;
}
</style>

<style scoped>
.screen {
  width: 2878px;
  height: 1800px;
  display: flex;
  flex-direction: column;
  overflow: hidden;
  background: linear-gradient(#c0bdb6 0 300px, #060704 300px);
  font-family: Inter, 'Liberation Sans', sans-serif;
}
.defs {
  position: absolute;
}
svg {
  display: block;
  flex: none;
  overflow: visible;
}
span {
  white-space: nowrap;
}

.menubar {
  height: 48px;
  flex: none;
  display: flex;
  align-items: center;
  background: linear-gradient(90deg, #f1f0e9, #eeede6 40%, #e7e6e0 70%, #e5e2dc);
  font-size: 25.5px;
  color: #000;
}
.apple {
  margin: 0 0 2px 39px;
}
.menus {
  display: flex;
  gap: 40px;
  margin-left: 42px;
  padding-bottom: 3px;
}
.app-name {
  font-weight: 700;
}
.status {
  flex: 1;
  display: flex;
  align-items: center;
  justify-content: flex-end;
  padding-right: 38px;
  color: #222;
}
.pods,
.play,
.lang {
  margin-left: 42px;
}
.lang {
  box-sizing: border-box;
  width: 44px;
  height: 32px;
  border: 2px solid #222;
  border-radius: 6px;
  display: flex;
  align-items: center;
  justify-content: center;
  font-size: 21.5px;
  font-weight: 500;
}
.battery { margin-left: 38px; }
.wifi { margin-left: 37px; }
.search { margin-left: 40px; }
.control { margin-left: 40px; }
.siri { margin-left: 36px; }
.date {
  margin-left: 32px;
  padding-bottom: 3px;
}
.time {
  margin-left: 15px;
  padding-bottom: 3px;
}

.window {
  height: 1638px;
  margin-top: 2px;
  flex: none;
  display: flex;
  flex-direction: column;
  border-radius: 20px;
  background: #393836;
  box-shadow: 0 0 0 1px #000, inset 0 2px 0 #6e6d6c, inset 0 0 0 1px #5a5958;
}
.toolbar {
  height: 104px;
  flex: none;
  display: flex;
  align-items: center;
}
.lights {
  display: flex;
  gap: 16px;
  margin-left: 38px;
}
.lights i {
  width: 24px;
  height: 24px;
  border-radius: 50%;
}
.red { background: #ee6a5f; }
.yellow { background: #f5be4f; }
.green { background: #61c554; }
.sidebar { margin: 0 0 3px 52px; }
.rule {
  width: 2px;
  height: 36px;
  margin-left: 13px;
  background: #4f4e4c;
}
.chev { margin-left: 13px; }
.back { margin: 0 0 2px 52px; }
.fwd { margin: 0 0 2px 56px; }
.abp { margin-left: 376px; }
.url {
  box-sizing: border-box;
  width: 1166px;
  height: 56px;
  margin-left: 26px;
  border: 2px solid #4e4d4b;
  border-radius: 15px;
  display: grid;
  grid-template-columns: 1fr auto 1fr;
  align-items: center;
  color: #fff;
}
.address {
  padding-left: 3px;
  font-size: 25.5px;
}
.url-icons {
  display: flex;
  justify-content: flex-end;
  gap: 13px;
  padding: 2px 11px 0 0;
}
.share { margin: 0 0 4px 637px; }
.plus { margin: 0 0 2px 44px; }
.copies { margin: 0 0 2px 44px; }

.tabs {
  height: 57px;
  flex: none;
  display: flex;
  box-sizing: border-box;
  border-bottom: 1px solid #000;
}
.pin,
.tab {
  box-sizing: border-box;
  display: flex;
  align-items: center;
  justify-content: center;
  background: #201f1e;
  border-top: 1px solid #000;
  border-right: 2px solid #4b4a48;
}
.pin {
  width: 72px;
}
.pin.first {
  width: 70px;
  padding-right: 2px;
}
.tab {
  flex: none;
  font-size: 22.3px;
  color: #9b9a98;
}
.video,
.repo {
  width: 817px;
  justify-content: flex-start;
}
.video {
  width: 818px;
  padding-left: 48px;
  gap: 10px;
}
.repo {
  width: 816px;
  padding-left: 46px;
  gap: 8px;
}
.active {
  flex: 1;
  padding-left: 2px;
  border: 0;
  background: #393836;
  color: #fff;
  font-weight: 500;
  gap: 9px;
}
.num {
  width: 32px;
  height: 32px;
  border-radius: 6px;
  background: #9392a0;
  font-size: 23px;
  font-weight: 600;
  line-height: 32px;
  text-align: center;
}

.page {
  flex: 1;
  display: flex;
  flex-direction: column;
  align-items: center;
  border-radius: 0 0 20px 20px;
  background: linear-gradient(#529fa1 0 1405px, #4b9194 1476px);
  box-shadow: inset 0 -2px 0 #78adae;
  font-family: 'Open Sans', sans-serif;
  color: #fff;
  -webkit-text-stroke: 0.9px #fff;
}
.page span {
  display: inline-block;
}
.page button {
  box-sizing: border-box;
  width: 576px;
  border: 4px solid #fff;
  color: #fff;
  font-family: inherit;
  font-weight: 500;
  display: flex;
  align-items: center;
  justify-content: center;
  -webkit-text-stroke: inherit;
}
.scores {
  align-self: flex-start;
  height: 98px;
  margin: 44px 0 0 599px;
  padding: 0 0 3px;
  border-radius: 48px;
  background: none;
  font-size: 42px;
}
h1 {
  margin: 34px 0 0;
  padding-right: 4px;
  font-size: 63px;
  line-height: 80px;
  font-weight: 700;
  -webkit-text-stroke: 0;
}
p {
  margin: 36px 0 0;
  padding-right: 6px;
  font-size: 42px;
  line-height: 60px;
  font-weight: 500;
}
.start {
  height: 86px;
  margin: 70px 2px 0 0;
  padding: 0 0 3px;
  border-radius: 40px;
  background: #d5534d;
  font-size: 33px;
}

.desk {
  position: relative;
  height: 112px;
  flex: none;
  background: #070805;
}
.behind {
  position: absolute;
  inset: 0;
}
.code {
  font-family: 'DejaVu Sans Mono', monospace;
}
.dock {
  position: relative;
  box-sizing: border-box;
  height: 92px;
  margin: 10px 56px 0 55px;
  padding: 0 0 0 12px;
  border: 2px solid #484845;
  border-radius: 27px;
  display: flex;
  align-items: center;
  background: linear-gradient(90deg, #1b1d16, #1c1d16 46%, #20201e 55%, #252522 80%, #222221);
}
.group {
  display: flex;
  gap: 18.74px;
  margin-bottom: 6px;
}
.app {
  position: relative;
  width: 56px;
  height: 56px;
}
.icon {
  width: 56px;
  height: 56px;
}
.icon.blender {
  width: 66px;
  margin-left: -5px;
}
.icon.contacts {
  width: 58px;
}
.icon.textedit {
  height: 64px;
  margin-top: -6px;
}
.icon.preview {
  width: 58px;
  height: 59px;
}
.badge {
  position: absolute;
  left: 39px;
  top: -7px;
  width: 26px;
  height: 26px;
  border-radius: 50%;
  background: #e24d3f;
  color: #fff;
  font-size: 15.5px;
  line-height: 26px;
  text-align: center;
}
.dot {
  position: absolute;
  left: 24px;
  top: 65px;
  width: 8px;
  height: 8px;
  border-radius: 50%;
  background: #9b9b96;
}
.split {
  width: 2px;
  height: 68px;
  margin: 0 25px;
  background: #5c5c5a;
}
.split.last {
  margin-right: 0;
}
.mini {
  position: relative;
  flex: none;
  margin-bottom: 6px;
}
.mini-app {
  position: absolute;
  top: 50%;
  width: 22px;
  height: 22px;
  margin-top: 10px;
}
.trash {
  margin: 0 0 5px 14px;
}
</style>
